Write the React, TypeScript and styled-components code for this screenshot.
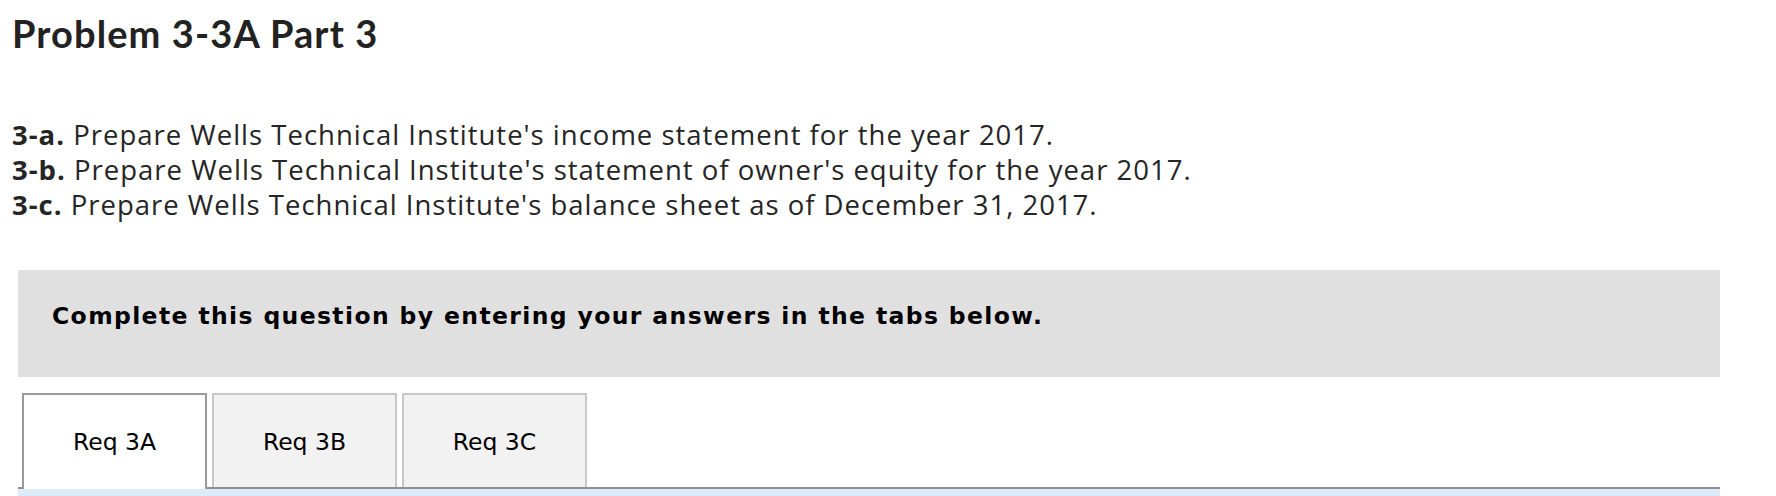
import styled, { createGlobalStyle } from "styled-components";

const GlobalStyle = createGlobalStyle`
  html, body {
    margin: 0;
    padding: 0;
    background: #ffffff;
  }
`;

const Page = styled.div`
  padding: 10px 56px 0 12px;
  font-family: "Open Sans", "Noto Sans", sans-serif;
  color: #252525;
`;

const Title = styled.h1`
  margin: 0;
  font-family: "Lato", "Noto Sans", sans-serif;
  font-size: 38px;
  line-height: 46px;
  font-weight: 700;
  letter-spacing: 1.1px;
  color: #222222;
`;

const Steps = styled.div`
  margin-top: 61px;
  font-size: 27.5px;
  line-height: 35px;
  letter-spacing: 1px;
`;

const Step = styled.div`
  white-space: nowrap;
`;

const StepKey = styled.b`
  font-weight: 700;
`;

const Notice = styled.div`
  margin: 48px 0 0 6px;
  height: 107px;
  box-sizing: border-box;
  padding: 32px 0 0 34px;
  background: #e0e0e0;
  font-family: "DejaVu Sans", Verdana, sans-serif;
  font-weight: 700;
  font-size: 23.5px;
  line-height: 28px;
  letter-spacing: 1.37px;
  color: #000000;
`;

const TabBar = styled.div`
  margin: 16px 0 0 6px;
  padding-left: 4px;
  display: flex;
  align-items: flex-end;
  gap: 5px;
  border-bottom: 2px solid #8f8f8f;
`;

const Tab = styled.button<{ $active?: boolean }>`
  all: unset;
  box-sizing: border-box;
  width: 185px;
  height: ${(p) => (p.$active ? "96px" : "94px")};
  margin-bottom: ${(p) => (p.$active ? "-2px" : "0")};
  display: flex;
  align-items: center;
  justify-content: center;
  padding-top: ${(p) => (p.$active ? "0" : "2px")};
  background: ${(p) => (p.$active ? "#ffffff" : "#f2f2f2")};
  border: 2px solid ${(p) => (p.$active ? "#9a9a9a" : "#c7c7c7")};
  border-bottom: none;
  font-family: "DejaVu Sans", Verdana, sans-serif;
  font-size: 23.5px;
  color: #000000;
  cursor: pointer;
`;

const Panel = styled.div`
  margin-left: 6px;
  height: 200px;
  background: #ddebf8;
`;

const steps = [
  { key: "3-a.", text: "Prepare Wells Technical Institute's income statement for the year 2017." },
  { key: "3-b.", text: "Prepare Wells Technical Institute's statement of owner's equity for the year 2017." },
  { key: "3-c.", text: "Prepare Wells Technical Institute's balance sheet as of December 31, 2017." },
];

export default function App() {
  return (
    <>
      <GlobalStyle />
      <Page>
        <Title>Problem 3-3A Part 3</Title>
        <Steps>
          {steps.map((s) => (
            <Step key={s.key}>
              <StepKey>{s.key}</StepKey> {s.text}
            </Step>
          ))}
        </Steps>
        <Notice>Complete this question by entering your answers in the tabs below.</Notice>
        <TabBar>
          <Tab $active>Req 3A</Tab>
          <Tab>Req 3B</Tab>
          <Tab>Req 3C</Tab>
        </TabBar>
        <Panel />
      </Page>
    </>
  );
}
